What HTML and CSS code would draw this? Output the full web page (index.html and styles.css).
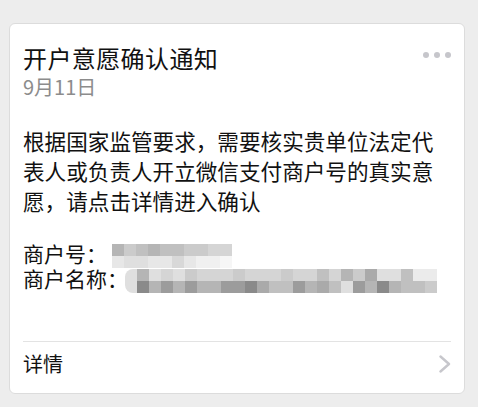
FILE: index.html
```html
<!DOCTYPE html>
<html lang="zh-CN">
<head>
<meta charset="utf-8">
<link rel="stylesheet" href="styles.css">
</head>
<body>
<div class="card">
  <div class="head">
    <div class="title">开户意愿确认通知</div>
    <div class="dots"><span></span><span></span><span></span></div>
  </div>
  <div class="date">9月11日</div>
  <div class="content">根据国家监管要求，需要核实贵单位法定代<br>表人或负责人开立微信支付商户号的真实意<br>愿，请点击详情进入确认</div>
  <div class="fields">
    <div class="field">商户号：</div>
    <div class="field">商户名称：</div>
    <div class="mosaic m-a">
      <div class="mrow"><i class="c4"></i><i class="c6"></i><i class="c5"></i><i class="c4"></i><i class="c5"></i><i class="c5"></i><i class="c6"></i><i class="c6"></i><i class="c7"></i><i class="c7"></i></div>
      <div class="mrow fade"><i class="c8"></i><i class="c7"></i><i class="c7"></i><i class="c8"></i><i class="c8"></i><i class="c6"></i><i class="c8"></i><i class="c9"></i><i class="c9"></i><i class="c10"></i></div>
    </div>
    <div class="mosaic m-b">
      <div class="mrow"><i class="c8 lead"></i><i class="c4"></i><i class="c8"></i><i class="c7"></i><i class="c8"></i><i class="c6"></i><i class="c7"></i><i class="c7"></i><i class="c7"></i><i class="c6"></i><i class="c7"></i><i class="c7"></i><i class="c7"></i><i class="c6"></i><i class="c7"></i><i class="c7"></i><i class="c5"></i><i class="c7"></i><i class="c4"></i><i class="c6"></i><i class="c3"></i><i class="c8"></i><i class="c8"></i><i class="c5"></i><i class="c9"></i><i class="c9"></i></div>
      <div class="mrow"><i class="c8 lead2"></i><i class="c1"></i><i class="c4"></i><i class="c2"></i><i class="c4"></i><i class="c2"></i><i class="c4"></i><i class="c4"></i><i class="c2"></i><i class="c2"></i><i class="c1"></i><i class="c3"></i><i class="c5"></i><i class="c5"></i><i class="c2"></i><i class="c4"></i><i class="c3"></i><i class="c5"></i><i class="c8"></i><i class="c2"></i><i class="c4"></i><i class="c1"></i><i class="c4"></i><i class="c5"></i><i class="c5"></i><i class="c6"></i></div>
    </div>
  </div>
  <div class="footer">
    <span class="more">详情</span>
    <svg class="chev" width="14" height="18" viewBox="0 0 14 18"><polyline points="2.5,1.5 11,9 2.5,16.5" fill="none" stroke="#c7c7cc" stroke-width="2.4" stroke-linecap="round" stroke-linejoin="round"/></svg>
  </div>
</div>
</body>
</html>
```
FILE: styles.css
```css
html, body {
  margin: 0;
  padding: 0;
  background: #ededed;
}
body {
  padding: 23px 13px 0 9px;
  font-family: "Noto Sans CJK SC", "Noto Sans", sans-serif;
  color: #111;
}
.card {
  background: #fff;
  border: 1px solid #dcdcdc;
  border-radius: 6px;
  height: 371px;
  box-sizing: border-box;
  padding: 18px 13px 0 13px;
  display: flex;
  flex-direction: column;
}
.head {
  display: flex;
  justify-content: space-between;
  align-items: flex-start;
}
.title {
  font-size: 24px;
  line-height: 32px;
  letter-spacing: 0.4px;
}
.dots {
  display: flex;
  gap: 5px;
  margin-top: 10px;
}
.dots span {
  width: 6px;
  height: 6px;
  border-radius: 50%;
  background: #c6c6cb;
}
.date {
  font-size: 20px;
  line-height: 26px;
  color: #8c8c8c;
}
.content {
  margin-top: 26px;
  font-size: 21.6px;
  line-height: 30px;
  white-space: nowrap;
}
.fields {
  position: relative;
  margin-top: 25px;
  font-size: 21px;
  line-height: 25px;
}
.field {
  height: 25px;
  overflow: visible;
}
.mosaic {
  position: absolute;
  display: flex;
  flex-direction: column;
}
.m-a { left: 89px; top: 3px; }
.m-b { left: 102px; top: 28px; }
.mrow { display: flex; }
.mrow i {
  display: block;
  width: 12px;
  height: 12px;
}
.mrow.fade { opacity: 0.75; }
.lead { border-radius: 8px 0 0 0; }
.lead2 { border-radius: 0 0 0 8px; }
.c1 { background: #8a8a8a; }
.c2 { background: #9c9c9c; }
.c3 { background: #aaaaaa; }
.c4 { background: #b5b5b5; }
.c5 { background: #c0c0c0; }
.c6 { background: #cbcbcb; }
.c7 { background: #d5d5d5; }
.c8 { background: #dfdfdf; }
.c9 { background: #ebebeb; }
.c10 { background: #f4f4f4; }
.footer {
  margin-top: auto;
  border-top: 1px solid #e3e3e3;
  padding: 7px 0 14px 0;
  display: flex;
  justify-content: space-between;
  align-items: center;
  line-height: 30px;
}
.more {
  font-size: 20px;
}
.chev {
  display: block;
  margin-right: -1px;
}
```
